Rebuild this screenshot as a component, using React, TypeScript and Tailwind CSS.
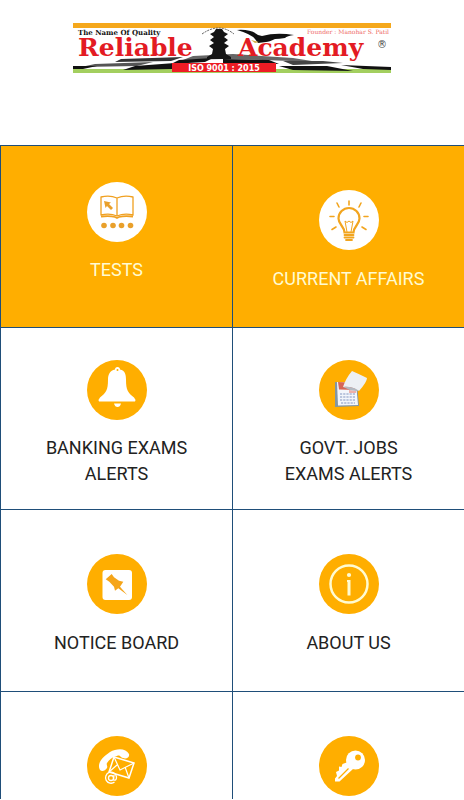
import type { ReactNode } from 'react';

function Logo() {
  return (
    <svg viewBox="0 0 318 50" className="h-[50px] w-[318px]" role="img" aria-label="Reliable Academy">
      <rect width="318" height="50" fill="#fff" />
      <rect width="318" height="5" fill="#f5a81c" />
      <rect y="46" width="318" height="4" fill="#a3cf5f" />
      {/* chequered floor */}
      <g fill="#111">
        <path d="M48 36L110 34L98 38L42 39Z" fill="#333" />
        <path d="M120 33L160 31L220 35L245 39L190 37L150 36L110 37Z" fill="#666" />
        <path d="M22 41L80 39L64 43L8 44Z" fill="#555" />
        <path d="M0 43L24 43L10 46L0 46Z" />
        <path d="M62 43L102 40L99 46L50 47Z" />
        <path d="M106 37L140 35L132 39L98 41Z" />
        <path d="M150 36L196 37L206 41L150 40Z" />
        <path d="M210 38L250 38L270 40L220 42Z" fill="#444" />
        <path d="M206 43L254 43L280 48L220 47Z" />
        <path d="M268 42L318 44L318 47L290 46Z" />
      </g>
      {/* tower */}
      <path d="M143 6h6l2 3 4 2-4 3 4 3-4 3 5 3-4 3 1 5 5 3v2h-24v-2l5-3 1-5-4-3 5-3-4-3 4-3-4-3 4-2z" fill="#151515" />
      <path d="M129 11q17-12 32 0" fill="none" stroke="#555" strokeDasharray="2 1" />
      {/* eagle */}
      <path d="M164 7q14-1 21 5l4 1q14-4 32-1-7 1-9 3-6 1-10 1-6 3-9 3l-8 1-3-4q-4-5-18-9z" fill="#111" />
      <path d="M178 17l8 2-4 1z" fill="#d5ad42" />
      <text x="5" y="12" fontSize="7" fontWeight="700" fill="#111" className="font-['DejaVu_Serif',serif]">The Name Of Quality</text>
      <text x="5" y="33" fontSize="25" fontWeight="700" fill="#e31b23" className="font-['DejaVu_Serif',serif]">Reliable</text>
      <text x="165" y="33" fontSize="25" fontWeight="700" fill="#e31b23" className="font-['DejaVu_Serif',serif]">Academy</text>
      <text x="304" y="25" fontSize="10" fill="#444" className="font-['DejaVu_Sans',sans-serif]">®</text>
      <text x="234" y="11" fontSize="6" fill="#ee6a65" className="font-['DejaVu_Serif',serif]">Founder : Manohar S. Patil</text>
      <rect x="99" y="40" width="104" height="9" fill="#ed1c24" />
      <text x="151" y="48" textAnchor="middle" fontSize="8" fontWeight="700" fill="#fff" className="font-['DejaVu_Sans',sans-serif]">ISO 9001 : 2015</text>
    </svg>
  );
}

/* All badge drawings share a 60 by 60 canvas. */
function Badge({ inverse = false, children }: { inverse?: boolean; children: ReactNode }) {
  return (
    <svg viewBox="0 0 60 60" className="size-[60px] shrink-0" aria-hidden="true">
      <circle cx="30" cy="30" r="30" fill={inverse ? '#fff' : '#ffae00'} />
      {children}
    </svg>
  );
}

const Book = () => (
  <Badge inverse>
    <g fill="none" stroke="#f0a020" strokeWidth="1.3" strokeLinejoin="round">
      <path d="M30 16q-7-3-16-1v18q9-2 16 1 7-3 16-1V15q-9-2-16 1v18" />
      <path d="M14 34.500q9-1 14 .5l2 1 2-1q5-1.500 14-.5" strokeWidth="1.800" />
    </g>
    <path d="M17 19l7 1.500-2 1.500 4 4-2 2-4-4-1.500 2z" fill="#e9a02b" />
    <g fill="#e9a02b">
      <circle cx="17" cy="43.500" r="2.800" />
      <circle cx="26" cy="43.500" r="2.800" />
      <circle cx="34.500" cy="43.500" r="2.800" />
      <circle cx="43.500" cy="43.500" r="2.800" />
    </g>
  </Badge>
);

const Bulb = () => (
  <Badge inverse>
    <g fill="none" stroke="#f2a51f" strokeLinecap="round">
      <path d="M25.500 42.500c0-6-6-8-6-14a10.500 10.500 0 0 1 21 0c0 6-6 8-6 14z" strokeWidth="2.200" />
      <path d="M28 42l-2-11 2 1.500 2-1.500 2 1.500 2-1.500-2 11" strokeWidth="1" />
      <path d="M30 15v-4M20 17l-2-4M40 17l2-4M15 26.500h-4M45 26.500h4M17 37l-4 2.500M43 37l4 2.500" strokeWidth="1.600" />
      <path d="M25.500 45h9M25.500 47.500h9M27 50h6" strokeWidth="1.800" />
    </g>
  </Badge>
);

const Bell = () => (
  <Badge>
    <path d="M28 9.500a2.500 2.500 0 0 1 5 0c5 1 6 5 6 10 0 11 2 13 8 18q2 2 1 4H12q-1-2 1-4c6-5 8-7 8-18 0-5 2-9 7-10z" fill="#fff" />
    <circle cx="30.500" cy="10" r="1" fill="#ffae00" />
    <path d="M27 43.500h7q-1 3.500-3.500 3.500T27 43.500z" fill="#fff" />
  </Badge>
);

const Calendar = () => (
  <Badge>
    <path d="M16 22l22 2 2 22-24 1z" fill="#8196a3" />
    <path d="M18 22l19 1 2 22-20 .5z" fill="#f3f6fb" />
    <path d="M19 22l17 1 1 7-17-.5z" fill="#d76657" />
    <g stroke="#a9b6d4" strokeWidth="1.300" strokeDasharray="2.200 1">
      <path d="M21 34h15M21 37h15M21 40h15M22 43h14" />
    </g>
    <path d="M30 30l7 1v2h-7z" fill="#efb0a8" />
    <path d="M33 11q7 3 15 7 0 4-8 13-8-5-16-4 3-9 9-16z" fill="#edf0f4" />
    <path d="M24 27q9-1 16 4l-3 0-6-1z" fill="#b2b9c1" />
  </Badge>
);

const Pin = () => (
  <Badge>
    <rect x="15.500" y="16" width="29.500" height="30" rx="3" fill="#fff" />
    <path d="M18.700 25.300L24.700 20L27 23.300L32 26.700L36.300 27.700L33 32.700L40.300 41L31.300 34.300L28 36.700L27 32.700L22.300 27.700Z" fill="#f5a51a" />
  </Badge>
);

const Info = () => (
  <Badge>
    <circle cx="30" cy="30" r="18.500" fill="none" stroke="#fffbd2" strokeWidth="2.500" />
    <circle cx="30" cy="21" r="2.100" fill="#fffbd2" />
    <path d="M28 26h3.500v15.500h-3V28H28z" fill="#fffbd2" />
  </Badge>
);

const Contact = () => (
  <Badge>
    <path d="M13 34c-4-7 4-14 10-18 7-4 16-4 19 2 1 4-4 6-8 3-1-1-2-2-4-1-5 1-8 4-10 7-1 2 1 3 0 5-2 3-5 4-7 2z" fill="#fff" />
    <path d="M27 21l20 6-5 15-20-6z" fill="#ffae00" stroke="#fff" strokeWidth="1.500" />
    <path d="M27 21l6 13 14-7M22 36l8-7M42 42l-4-11" fill="none" stroke="#fff" strokeWidth="1.200" />
    <g fill="none" stroke="#fff" strokeWidth="1.300">
      <circle cx="24" cy="42" r="2.500" />
      <path d="M27 39l-.5 5q3 1 3-3a5.500 5.500 0 1 0-2 5" />
    </g>
  </Badge>
);

const Key = () => (
  <Badge>
    <circle cx="36.500" cy="24" r="9.500" fill="#fff" />
    <path d="M29 26L23.500 28L22.500 31L20 30.500V34.500L17 36L18 40L16 42.500V45.500H20.500L34 33Z" fill="#fff" />
    <circle cx="39" cy="21.500" r="2.900" fill="#ffae00" />
    <path d="M19.500 42.500L29.500 32.500" stroke="#ffae00" strokeWidth="1.300" />
  </Badge>
);

type Tile = { name: string; label: string; lines: string[]; icon: ReactNode; look: string };

const plain = 'bg-white text-[#222]';
const active = 'bg-[#ffae00] text-[#fffbd2]';

const tiles: Tile[] = [
  { name: 'tests', label: 'Tests', lines: ['TESTS'], icon: <Book />, look: `${active} min-h-[182px] gap-[15px] pt-9` },
  { name: 'current', label: 'Current affairs', lines: ['CURRENT AFFAIRS'], icon: <Bulb />, look: `${active} min-h-[182px] gap-4 pt-11` },
  { name: 'banking', label: 'Banking exams alerts', lines: ['BANKING EXAMS', 'ALERTS'], icon: <Bell />, look: `${plain} min-h-[182px] gap-[15px] pt-8` },
  { name: 'govt', label: 'Govt. jobs exams alerts', lines: ['GOVT. JOBS', 'EXAMS ALERTS'], icon: <Calendar />, look: `${plain} min-h-[182px] gap-[15px] pt-8` },
  { name: 'notice', label: 'Notice board', lines: ['NOTICE BOARD'], icon: <Pin />, look: `${plain} min-h-[182px] gap-4 pt-11` },
  { name: 'about', label: 'About us', lines: ['ABOUT US'], icon: <Info />, look: `${plain} min-h-[182px] gap-4 pt-11` },
  { name: 'contact', label: 'Contact', lines: [], icon: <Contact />, look: `${plain} min-h-[108px] gap-4 pt-11` },
  { name: 'key', label: 'Password', lines: [], icon: <Key />, look: `${plain} min-h-[108px] gap-4 pt-11` },
];

export default function App() {
  return (
    <div className="bg-white font-[Roboto,sans-serif]">
      <header className="flex h-[145px] justify-center pt-[23px]">
        <Logo />
      </header>
      <main className="grid grid-cols-2">
        {tiles.map((tile) => (
          <a
            key={tile.name}
            href={`#${tile.name}`}
            aria-label={tile.label}
            className={`flex flex-col items-center border-t border-l border-[#1f4e79] text-center text-lg leading-[26px] ${tile.look}`}
          >
            {tile.icon}
            {tile.lines.length > 0 && (
              <span>
                {tile.lines.map((line) => (
                  <span key={line} className="block">{line}</span>
                ))}
              </span>
            )}
          </a>
        ))}
      </main>
    </div>
  );
}
